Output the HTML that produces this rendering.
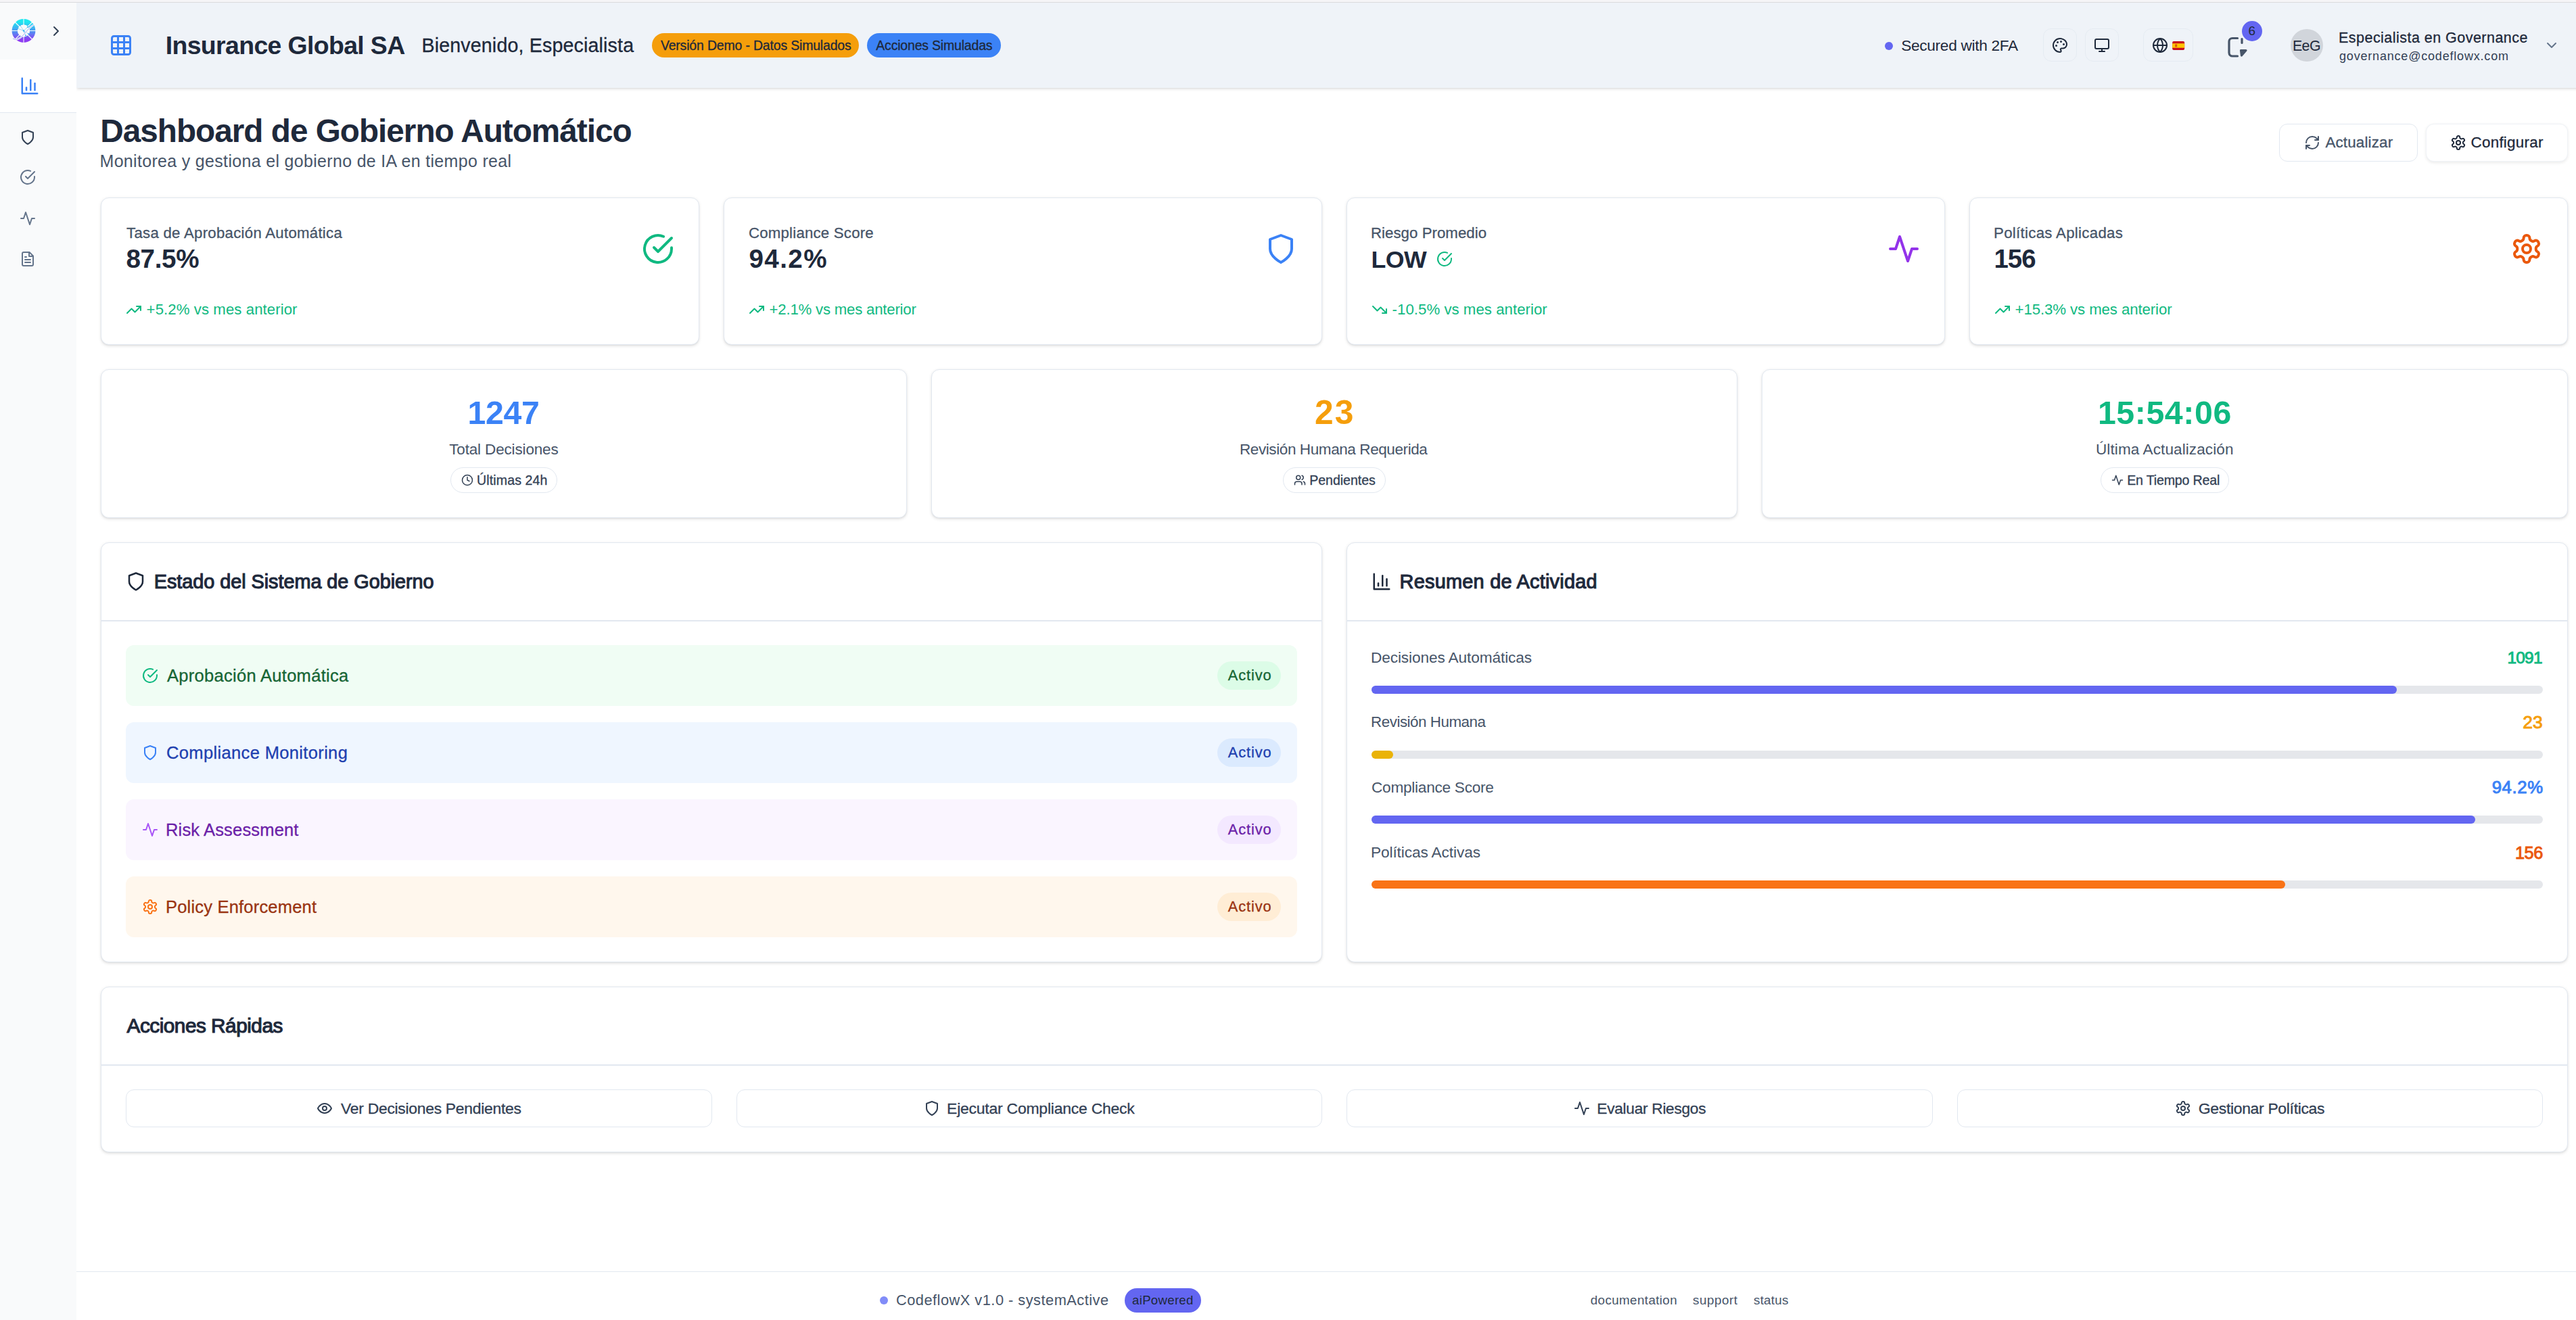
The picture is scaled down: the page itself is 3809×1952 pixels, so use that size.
<!DOCTYPE html>
<html lang="es"><head><meta charset="utf-8"><title>Dashboard de Gobierno Automático</title>
<style>
html,body{margin:0;padding:0;width:3809px;height:1952px;overflow:hidden;background:#fff}
body{position:relative;font-family:"Liberation Sans",sans-serif}
.t{position:absolute;line-height:0;white-space:nowrap}
.b{position:absolute}
.i{position:absolute;overflow:visible}
</style></head><body>
<div class="b" style="left:0px;top:0px;width:3809px;height:3px;background:#f5f4f6"></div>
<div class="b" style="left:0px;top:3px;width:3809px;height:1px;background:#dadadd"></div>
<div class="b" style="left:0px;top:4px;width:113px;height:1948px;background:#f9fafb"></div>
<div class="b" style="left:0px;top:88px;width:113px;height:78px;background:#ffffff"></div>
<div class="b" style="left:0px;top:166px;width:113px;height:1px;background:#e2e8f0"></div>
<div class="b" style="left:113px;top:4px;width:3696px;height:150px;overflow:hidden"><div class="b" style="left:0;top:0;width:3720px;height:125.5px;background:#eff3f8;box-shadow:0 1.5px 4.5px 0 rgba(0,0,0,0.1),0 1.5px 3px -1.5px rgba(0,0,0,0.1)"></div></div>
<div class="b" style="left:113px;top:1880px;width:3696px;height:72px;background:#ffffff;border-top:1.5px solid #e2e8f0"></div>
<svg class="i" style="left:16px;top:27px" width="38" height="38" viewBox="0 0 38 38">
<defs><linearGradient id="lg" x1="0" y1="0" x2="0" y2="1"><stop offset="0" stop-color="#1ee8f0"/><stop offset="0.5" stop-color="#4b9af2"/><stop offset="1" stop-color="#8d3df2"/></linearGradient></defs>
<circle cx="19" cy="18.5" r="13.2" fill="none" stroke="url(#lg)" stroke-width="8.4"/>
<g stroke="#f9fafb" stroke-width="1.1"><line x1="19" y1="0" x2="19" y2="38"/><line x1="0" y1="18.5" x2="38" y2="18.5"/><line x1="5.5" y1="5" x2="32.5" y2="32"/><line x1="32.5" y1="5" x2="5.5" y2="32"/></g>
<circle cx="19" cy="18.5" r="9" fill="#f9fafb"/>
<g stroke="#5cc0f0" stroke-width="0.6"><line x1="19" y1="18.5" x2="13.5" y2="10"/><line x1="19" y1="18.5" x2="10" y2="15"/><line x1="19" y1="18.5" x2="25" y2="13"/><line x1="19" y1="18.5" x2="22" y2="25.5"/><line x1="19" y1="18.5" x2="26" y2="23"/></g>
<g fill="#3fb4f0"><circle cx="13.5" cy="10" r="1.2"/><circle cx="10" cy="15" r="1.1"/><circle cx="25" cy="13" r="1.1"/><circle cx="22" cy="25.5" r="1.1"/><circle cx="26" cy="23" r="1"/><circle cx="19" cy="18.5" r="1.2"/><circle cx="20.5" cy="21" r="1"/></g>
<path d="M3 30 C 9 34, 16 28, 21 22 S 31 10, 34 10" stroke="#f9fafb" stroke-width="2.6" fill="none"/>
<path d="M3 30 C 9 34, 16 28, 21 22 S 31 10, 34 10" stroke="#7d8af0" stroke-width="0.7" fill="none"/>
</svg>
<svg class="i" style="left:71.00px;top:34.00px;color:#334155" width="24" height="24" viewBox="0 0 24 24" fill="none" stroke="currentColor" stroke-width="2" stroke-linecap="round" stroke-linejoin="round"><path d="m9 18 6-6-6-6"/></svg>
<svg class="i" style="left:28.70px;top:111.50px;color:#3b82f6" width="30" height="30" viewBox="0 0 24 24" fill="none" stroke="currentColor" stroke-width="2" stroke-linecap="round" stroke-linejoin="round"><path d="M3 3v18h18"/><path d="M18 17V9"/><path d="M13 17V5"/><path d="M8 17v-3"/></svg>
<svg class="i" style="left:28.70px;top:191.00px;color:#334155" width="24" height="24" viewBox="0 0 24 24" fill="none" stroke="currentColor" stroke-width="2" stroke-linecap="round" stroke-linejoin="round"><path d="M12 22s8-4 8-10V5l-8-3-8 3v7c0 6 8 10 8 10z"/></svg>
<svg class="i" style="left:28.70px;top:250.00px;color:#64748b" width="24" height="24" viewBox="0 0 24 24" fill="none" stroke="currentColor" stroke-width="2" stroke-linecap="round" stroke-linejoin="round"><path d="M22 11.08V12a10 10 0 1 1-5.93-9.14"/><polyline points="22 4 12 14.01 9 11.01"/></svg>
<svg class="i" style="left:28.70px;top:311.00px;color:#64748b" width="24" height="24" viewBox="0 0 24 24" fill="none" stroke="currentColor" stroke-width="2" stroke-linecap="round" stroke-linejoin="round"><polyline points="22 12 18 12 15 21 9 3 6 12 2 12"/></svg>
<svg class="i" style="left:28.70px;top:371.00px;color:#64748b" width="24" height="24" viewBox="0 0 24 24" fill="none" stroke="currentColor" stroke-width="2" stroke-linecap="round" stroke-linejoin="round"><path d="M14.5 2H6a2 2 0 0 0-2 2v16a2 2 0 0 0 2 2h12a2 2 0 0 0 2-2V7.5L14.5 2z"/><polyline points="14 2 14 8 20 8"/><line x1="16" x2="8" y1="13" y2="13"/><line x1="16" x2="8" y1="17" y2="17"/><line x1="10" x2="8" y1="9" y2="9"/></svg>
<svg class="i" style="left:161.00px;top:48.80px;color:#3b82f6" width="36" height="36" viewBox="0 0 24 24" fill="none" stroke="currentColor" stroke-width="2" stroke-linecap="round" stroke-linejoin="round"><rect width="18" height="18" x="3" y="3" rx="2"/><path d="M3 9h18"/><path d="M3 15h18"/><path d="M9 3v18"/><path d="M15 3v18"/></svg>
<div class="t" style="left:244.70px;top:66.81px;font-size:37.50px;letter-spacing:-0.678px;color:#1e293b;font-weight:bold;">Insurance Global SA</div>
<div class="t" style="left:623.40px;top:66.88px;font-size:28.63px;letter-spacing:0.148px;color:#1e293b;font-weight:normal;-webkit-text-stroke-width:0.3px;">Bienvenido, Especialista</div>
<div class="b" style="left:964px;top:49px;width:306px;height:36px;background:#f59e0b;border-radius:18px"></div>
<div class="t" style="left:976.90px;top:67.25px;font-size:19.48px;letter-spacing:-0.169px;color:#1e293b;font-weight:normal;-webkit-text-stroke-width:0.3px;">Versión Demo - Datos Simulados</div>
<div class="b" style="left:1282px;top:49px;width:198px;height:36px;background:#3b82f6;border-radius:18px"></div>
<div class="t" style="left:1295.30px;top:67.25px;font-size:19.48px;letter-spacing:-0.182px;color:#1e293b;font-weight:normal;-webkit-text-stroke-width:0.3px;">Acciones Simuladas</div>
<div class="b" style="left:2787.3px;top:61.5px;width:12px;height:12px;background:#6366f1;border-radius:6px"></div>
<div class="t" style="left:2811.20px;top:67.14px;font-size:22.67px;letter-spacing:-0.307px;color:#1e293b;font-weight:normal;">Secured with 2FA</div>
<div class="b" style="left:3021px;top:42px;width:50px;height:49.3px;border:1.5px solid rgba(226,232,240,0.8);border-radius:12px;box-sizing:border-box"></div>
<div class="b" style="left:3083px;top:42px;width:50px;height:49.3px;border:1.5px solid rgba(226,232,240,0.8);border-radius:12px;box-sizing:border-box"></div>
<div class="b" style="left:3169.3px;top:42px;width:73.4px;height:49.3px;border:1.5px solid rgba(226,232,240,0.8);border-radius:12px;box-sizing:border-box"></div>
<svg class="i" style="left:3034.00px;top:55.00px;color:#1e293b" width="24" height="24" viewBox="0 0 24 24" fill="none" stroke="currentColor" stroke-width="2" stroke-linecap="round" stroke-linejoin="round"><circle cx="13.5" cy="6.5" r=".5" fill="currentColor"/><circle cx="17.5" cy="10.5" r=".5" fill="currentColor"/><circle cx="8.5" cy="7.5" r=".5" fill="currentColor"/><circle cx="6.5" cy="12.5" r=".5" fill="currentColor"/><path d="M12 2C6.5 2 2 6.5 2 12s4.5 10 10 10c.926 0 1.648-.746 1.648-1.688 0-.437-.18-.835-.437-1.125-.29-.289-.438-.652-.438-1.125a1.64 1.64 0 0 1 1.668-1.668h1.996c3.051 0 5.555-2.503 5.555-5.554C21.965 6.012 17.461 2 12 2z"/></svg>
<svg class="i" style="left:3096.00px;top:55.00px;color:#1e293b" width="24" height="24" viewBox="0 0 24 24" fill="none" stroke="currentColor" stroke-width="2" stroke-linecap="round" stroke-linejoin="round"><rect width="20" height="14" x="2" y="3" rx="2"/><line x1="8" x2="16" y1="21" y2="21"/><line x1="12" x2="12" y1="17" y2="21"/></svg>
<svg class="i" style="left:3182.00px;top:54.80px;color:#1e293b" width="24" height="24" viewBox="0 0 24 24" fill="none" stroke="currentColor" stroke-width="2" stroke-linecap="round" stroke-linejoin="round"><circle cx="12" cy="12" r="10"/><path d="M12 2a14.5 14.5 0 0 0 0 20 14.5 14.5 0 0 0 0-20"/><path d="M2 12h20"/></svg>
<svg class="i" style="left:3212px;top:61px" width="18.3" height="13" viewBox="0 0 18 13"><rect width="18" height="13" rx="2" fill="#c60b1e"/><rect y="3.25" width="18" height="6.5" fill="#ffc400"/><rect x="4" y="4.5" width="3" height="4" fill="#c60b1e" opacity="0.6"/></svg>
<svg class="i" style="left:3280px;top:40px" width="60" height="60" viewBox="3280 40 60 60" fill="none" stroke="#475569" stroke-width="3.2" stroke-linecap="round" stroke-linejoin="round"><path d="M3308.5 56.5H3301a5 5 0 0 0-5 5V78a5 5 0 0 0 5 5h7.5"/><path d="M3315 57.5v6"/><path d="M3313.5 74.5L3321 74.5L3314.5 82Z" fill="#475569"/></svg>
<div class="b" style="left:3315px;top:31px;width:30px;height:30px;background:#6366f1;border-radius:15px"></div>
<div class="t" style="left:3324.50px;top:46.45px;font-size:18.90px;letter-spacing:0.000px;color:#1e293b;font-weight:normal;">6</div>
<div class="b" style="left:3387px;top:42.5px;width:48px;height:48px;background:#d1d5db;border-radius:24px"></div>
<div class="t" style="left:3389.90px;top:67.69px;font-size:21.38px;letter-spacing:-0.550px;color:#1e293b;font-weight:normal;">EeG</div>
<div class="t" style="left:3458.00px;top:55.75px;font-size:21.51px;letter-spacing:0.468px;color:#1e293b;font-weight:normal;-webkit-text-stroke-width:0.3px;">Especialista en Governance</div>
<div class="t" style="left:3459.00px;top:82.65px;font-size:18.02px;letter-spacing:0.800px;color:#334155;font-weight:normal;">governance@codeflowx.com</div>
<svg class="i" style="left:3761.00px;top:54.80px;color:#64748b" width="24" height="24" viewBox="0 0 24 24" fill="none" stroke="currentColor" stroke-width="2" stroke-linecap="round" stroke-linejoin="round"><path d="m6 9 6 6 6-6"/></svg>
<div class="t" style="left:148.30px;top:193.75px;font-size:47.75px;letter-spacing:-1.023px;color:#1e293b;font-weight:bold;">Dashboard de Gobierno Automático</div>
<div class="t" style="left:147.50px;top:238.14px;font-size:25.00px;letter-spacing:0.317px;color:#475569;font-weight:normal;">Monitorea y gestiona el gobierno de IA en tiempo real</div>
<div class="b" style="left:3370px;top:183px;width:204.5px;height:55.5px;background:#fff;border:1.5px solid #e2e8f0;border-radius:12px;box-sizing:border-box"></div>
<svg class="i" style="left:3407.00px;top:199.00px;color:#475569" width="24" height="24" viewBox="0 0 24 24" fill="none" stroke="currentColor" stroke-width="2" stroke-linecap="round" stroke-linejoin="round"><path d="M3 12a9 9 0 0 1 9-9 9.75 9.75 0 0 1 6.74 2.74L21 8"/><path d="M21 3v5h-5"/><path d="M21 12a9 9 0 0 1-9 9 9.75 9.75 0 0 1-6.74-2.74L3 16"/><path d="M8 16H3v5"/></svg>
<div class="t" style="left:3438.40px;top:211.34px;font-size:22.38px;letter-spacing:0.167px;color:#475569;font-weight:normal;-webkit-text-stroke-width:0.3px;">Actualizar</div>
<div class="b" style="left:3586.6px;top:183px;width:210.4px;height:55.5px;background:#fff;border:1.5px solid rgba(226,232,240,0.5);border-radius:12px;box-sizing:border-box;box-shadow:0 1.5px 4px rgba(0,0,0,0.08)"></div>
<svg class="i" style="left:3623.00px;top:199.00px;color:#1e293b" width="24" height="24" viewBox="0 0 24 24" fill="none" stroke="currentColor" stroke-width="2" stroke-linecap="round" stroke-linejoin="round"><path d="M12.22 2h-.44a2 2 0 0 0-2 2v.18a2 2 0 0 1-1 1.73l-.43.25a2 2 0 0 1-2 0l-.15-.08a2 2 0 0 0-2.73.73l-.22.38a2 2 0 0 0 .73 2.73l.15.1a2 2 0 0 1 1 1.72v.51a2 2 0 0 1-1 1.74l-.15.09a2 2 0 0 0-.73 2.73l.22.38a2 2 0 0 0 2.73.73l.15-.08a2 2 0 0 1 2 0l.43.25a2 2 0 0 1 1 1.73V20a2 2 0 0 0 2 2h.44a2 2 0 0 0 2-2v-.18a2 2 0 0 1 1-1.73l.43-.25a2 2 0 0 1 2 0l.15.08a2 2 0 0 0 2.73-.73l.22-.39a2 2 0 0 0-.73-2.73l-.15-.08a2 2 0 0 1-1-1.74v-.5a2 2 0 0 1 1-1.74l.15-.09a2 2 0 0 0 .73-2.73l-.22-.38a2 2 0 0 0-2.73-.73l-.15.08a2 2 0 0 1-2 0l-.43-.25a2 2 0 0 1-1-1.73V4a2 2 0 0 0-2-2z"/><circle cx="12" cy="12" r="3"/></svg>
<div class="t" style="left:3653.50px;top:211.34px;font-size:22.38px;letter-spacing:0.278px;color:#1e293b;font-weight:normal;-webkit-text-stroke-width:0.3px;">Configurar</div>
<div class="b" style="left:149px;top:292px;width:885px;height:218px;background:#fff;border:1.5px solid #e2e8f0;border-radius:12px;box-sizing:border-box;box-shadow:0 1.5px 4.5px 0 rgba(0,0,0,0.1),0 1.5px 3px -1.5px rgba(0,0,0,0.1)"></div>
<div class="t" style="left:187.00px;top:344.59px;font-size:22.24px;letter-spacing:0.261px;color:#475569;font-weight:normal;-webkit-text-stroke-width:0.3px;">Tasa de Aprobación Automática</div>
<div class="t" style="left:186.50px;top:383.10px;font-size:38.66px;letter-spacing:-0.375px;color:#1e293b;font-weight:bold;">87.5%</div>
<svg class="i" style="left:186.00px;top:446.00px;color:#10b981" width="24" height="24" viewBox="0 0 24 24" fill="none" stroke="currentColor" stroke-width="2" stroke-linecap="round" stroke-linejoin="round"><polyline points="22 7 13.5 15.5 8.5 10.5 2 17"/><polyline points="16 7 22 7 22 13"/></svg>
<div class="t" style="left:216.60px;top:458.29px;font-size:22.24px;letter-spacing:0.055px;color:#10b981;font-weight:normal;">+5.2% vs mes anterior</div>
<svg class="i" style="left:949.00px;top:344.00px;color:#10b981" width="48" height="48" viewBox="0 0 24 24" fill="none" stroke="currentColor" stroke-width="2" stroke-linecap="round" stroke-linejoin="round"><path d="M22 11.08V12a10 10 0 1 1-5.93-9.14"/><polyline points="22 4 12 14.01 9 11.01"/></svg>
<div class="b" style="left:1070px;top:292px;width:885px;height:218px;background:#fff;border:1.5px solid #e2e8f0;border-radius:12px;box-sizing:border-box;box-shadow:0 1.5px 4.5px 0 rgba(0,0,0,0.1),0 1.5px 3px -1.5px rgba(0,0,0,0.1)"></div>
<div class="t" style="left:1107.00px;top:344.59px;font-size:22.24px;letter-spacing:0.200px;color:#475569;font-weight:normal;-webkit-text-stroke-width:0.3px;">Compliance Score</div>
<div class="t" style="left:1107.50px;top:383.10px;font-size:38.66px;letter-spacing:1.375px;color:#1e293b;font-weight:bold;">94.2%</div>
<svg class="i" style="left:1107.00px;top:446.00px;color:#10b981" width="24" height="24" viewBox="0 0 24 24" fill="none" stroke="currentColor" stroke-width="2" stroke-linecap="round" stroke-linejoin="round"><polyline points="22 7 13.5 15.5 8.5 10.5 2 17"/><polyline points="16 7 22 7 22 13"/></svg>
<div class="t" style="left:1137.60px;top:458.29px;font-size:22.24px;letter-spacing:-0.230px;color:#10b981;font-weight:normal;">+2.1% vs mes anterior</div>
<svg class="i" style="left:1870.00px;top:344.00px;color:#3b82f6" width="48" height="48" viewBox="0 0 24 24" fill="none" stroke="currentColor" stroke-width="2" stroke-linecap="round" stroke-linejoin="round"><path d="M12 22s8-4 8-10V5l-8-3-8 3v7c0 6 8 10 8 10z"/></svg>
<div class="b" style="left:1991px;top:292px;width:885px;height:218px;background:#fff;border:1.5px solid #e2e8f0;border-radius:12px;box-sizing:border-box;box-shadow:0 1.5px 4.5px 0 rgba(0,0,0,0.1),0 1.5px 3px -1.5px rgba(0,0,0,0.1)"></div>
<div class="t" style="left:2027.00px;top:344.59px;font-size:22.24px;letter-spacing:0.036px;color:#475569;font-weight:normal;-webkit-text-stroke-width:0.3px;">Riesgo Promedio</div>
<div class="t" style="left:2027.50px;top:384.12px;font-size:35.72px;letter-spacing:-0.600px;color:#1e293b;font-weight:bold;">LOW</div>
<svg class="i" style="left:2028.00px;top:446.00px;color:#10b981" width="24" height="24" viewBox="0 0 24 24" fill="none" stroke="currentColor" stroke-width="2" stroke-linecap="round" stroke-linejoin="round"><polyline points="22 17 13.5 8.5 8.5 13.5 2 7"/><polyline points="16 17 22 17 22 11"/></svg>
<div class="t" style="left:2058.60px;top:458.29px;font-size:22.24px;letter-spacing:0.024px;color:#10b981;font-weight:normal;">-10.5% vs mes anterior</div>
<svg class="i" style="left:2791.00px;top:344.00px;color:#9333ea" width="48" height="48" viewBox="0 0 24 24" fill="none" stroke="currentColor" stroke-width="2" stroke-linecap="round" stroke-linejoin="round"><polyline points="22 12 18 12 15 21 9 3 6 12 2 12"/></svg>
<div class="b" style="left:2912px;top:292px;width:885px;height:218px;background:#fff;border:1.5px solid #e2e8f0;border-radius:12px;box-sizing:border-box;box-shadow:0 1.5px 4.5px 0 rgba(0,0,0,0.1),0 1.5px 3px -1.5px rgba(0,0,0,0.1)"></div>
<div class="t" style="left:2948.00px;top:344.59px;font-size:22.24px;letter-spacing:0.306px;color:#475569;font-weight:normal;-webkit-text-stroke-width:0.3px;">Políticas Aplicadas</div>
<div class="t" style="left:2948.50px;top:383.21px;font-size:38.37px;letter-spacing:-1.000px;color:#1e293b;font-weight:bold;">156</div>
<svg class="i" style="left:2949.00px;top:446.00px;color:#10b981" width="24" height="24" viewBox="0 0 24 24" fill="none" stroke="currentColor" stroke-width="2" stroke-linecap="round" stroke-linejoin="round"><polyline points="22 7 13.5 15.5 8.5 10.5 2 17"/><polyline points="16 7 22 7 22 13"/></svg>
<div class="t" style="left:2979.60px;top:458.29px;font-size:22.24px;letter-spacing:-0.105px;color:#10b981;font-weight:normal;">+15.3% vs mes anterior</div>
<svg class="i" style="left:3712.00px;top:344.00px;color:#ea580c" width="48" height="48" viewBox="0 0 24 24" fill="none" stroke="currentColor" stroke-width="2" stroke-linecap="round" stroke-linejoin="round"><path d="M12.22 2h-.44a2 2 0 0 0-2 2v.18a2 2 0 0 1-1 1.73l-.43.25a2 2 0 0 1-2 0l-.15-.08a2 2 0 0 0-2.73.73l-.22.38a2 2 0 0 0 .73 2.73l.15.1a2 2 0 0 1 1 1.72v.51a2 2 0 0 1-1 1.74l-.15.09a2 2 0 0 0-.73 2.73l.22.38a2 2 0 0 0 2.73.73l.15-.08a2 2 0 0 1 2 0l.43.25a2 2 0 0 1 1 1.73V20a2 2 0 0 0 2 2h.44a2 2 0 0 0 2-2v-.18a2 2 0 0 1 1-1.73l.43-.25a2 2 0 0 1 2 0l.15.08a2 2 0 0 0 2.73-.73l.22-.39a2 2 0 0 0-.73-2.73l-.15-.08a2 2 0 0 1-1-1.74v-.5a2 2 0 0 1 1-1.74l.15-.09a2 2 0 0 0 .73-2.73l-.22-.38a2 2 0 0 0-2.73-.73l-.15.08a2 2 0 0 1-2 0l-.43-.25a2 2 0 0 1-1-1.73V4a2 2 0 0 0-2-2z"/><circle cx="12" cy="12" r="3"/></svg>
<svg class="i" style="left:2124.00px;top:371.00px;color:#10b981" width="24" height="24" viewBox="0 0 24 24" fill="none" stroke="currentColor" stroke-width="2" stroke-linecap="round" stroke-linejoin="round"><path d="M22 11.08V12a10 10 0 1 1-5.93-9.14"/><polyline points="22 4 12 14.01 9 11.01"/></svg>
<div class="b" style="left:149px;top:546px;width:1192px;height:220px;background:#fff;border:1.5px solid #e2e8f0;border-radius:12px;box-sizing:border-box;box-shadow:0 1.5px 4.5px 0 rgba(0,0,0,0.1),0 1.5px 3px -1.5px rgba(0,0,0,0.1)"></div>
<div class="t" style="left:691.45px;top:610.28px;font-size:48.26px;letter-spacing:-0.300px;color:#3b82f6;font-weight:bold;">1247</div>
<div class="t" style="left:664.20px;top:664.59px;font-size:22.53px;letter-spacing:-0.160px;color:#475569;font-weight:normal;">Total Decisiones</div>
<div class="b" style="left:666.1px;top:691px;width:157.8px;height:37.7px;border:1.5px solid #e2e8f0;border-radius:19px;box-sizing:border-box;background:#fff"></div>
<svg class="i" style="left:682.10px;top:700.80px;color:#334155" width="18" height="18" viewBox="0 0 24 24" fill="none" stroke="currentColor" stroke-width="2" stroke-linecap="round" stroke-linejoin="round"><circle cx="12" cy="12" r="10"/><polyline points="12 6 12 12 16 14"/></svg>
<div class="t" style="left:705.10px;top:710.00px;font-size:19.62px;letter-spacing:0.080px;color:#334155;font-weight:normal;-webkit-text-stroke-width:0.3px;">Últimas 24h</div>
<div class="b" style="left:1377px;top:546px;width:1192px;height:220px;background:#fff;border:1.5px solid #e2e8f0;border-radius:12px;box-sizing:border-box;box-shadow:0 1.5px 4.5px 0 rgba(0,0,0,0.1),0 1.5px 3px -1.5px rgba(0,0,0,0.1)"></div>
<div class="t" style="left:1944.00px;top:609.77px;font-size:49.72px;letter-spacing:2.000px;color:#f59e0b;font-weight:bold;">23</div>
<div class="t" style="left:1833.00px;top:664.59px;font-size:22.53px;letter-spacing:-0.417px;color:#475569;font-weight:normal;">Revisión Humana Requerida</div>
<div class="b" style="left:1897.2px;top:691px;width:151.6px;height:37.7px;border:1.5px solid #e2e8f0;border-radius:19px;box-sizing:border-box;background:#fff"></div>
<svg class="i" style="left:1913.20px;top:700.80px;color:#334155" width="18" height="18" viewBox="0 0 24 24" fill="none" stroke="currentColor" stroke-width="2" stroke-linecap="round" stroke-linejoin="round"><path d="M16 21v-2a4 4 0 0 0-4-4H6a4 4 0 0 0-4 4v2"/><circle cx="9" cy="7" r="4"/><path d="M22 21v-2a4 4 0 0 0-3-3.87"/><path d="M16 3.13a4 4 0 0 1 0 7.75"/></svg>
<div class="t" style="left:1936.20px;top:710.00px;font-size:19.62px;letter-spacing:-0.044px;color:#334155;font-weight:normal;-webkit-text-stroke-width:0.3px;">Pendientes</div>
<div class="b" style="left:2605px;top:546px;width:1192px;height:220px;background:#fff;border:1.5px solid #e2e8f0;border-radius:12px;box-sizing:border-box;box-shadow:0 1.5px 4.5px 0 rgba(0,0,0,0.1),0 1.5px 3px -1.5px rgba(0,0,0,0.1)"></div>
<div class="t" style="left:3101.90px;top:610.28px;font-size:48.26px;letter-spacing:0.600px;color:#10b981;font-weight:bold;">15:54:06</div>
<div class="t" style="left:3099.00px;top:664.59px;font-size:22.53px;letter-spacing:0.105px;color:#475569;font-weight:normal;">Última Actualización</div>
<div class="b" style="left:3106.2px;top:691px;width:189.6px;height:37.7px;border:1.5px solid #e2e8f0;border-radius:19px;box-sizing:border-box;background:#fff"></div>
<svg class="i" style="left:3122.20px;top:700.80px;color:#334155" width="18" height="18" viewBox="0 0 24 24" fill="none" stroke="currentColor" stroke-width="2" stroke-linecap="round" stroke-linejoin="round"><polyline points="22 12 18 12 15 21 9 3 6 12 2 12"/></svg>
<div class="t" style="left:3145.20px;top:710.00px;font-size:19.62px;letter-spacing:-0.185px;color:#334155;font-weight:normal;-webkit-text-stroke-width:0.3px;">En Tiempo Real</div>
<div class="b" style="left:149px;top:802px;width:1806px;height:621px;background:#fff;border:1.5px solid #e2e8f0;border-radius:12px;box-sizing:border-box;box-shadow:0 1.5px 4.5px 0 rgba(0,0,0,0.1),0 1.5px 3px -1.5px rgba(0,0,0,0.1)"></div>
<div class="b" style="left:149px;top:917px;width:1806px;height:1.5px;background:#e2e8f0"></div>
<div class="b" style="left:1991px;top:802px;width:1806px;height:621px;background:#fff;border:1.5px solid #e2e8f0;border-radius:12px;box-sizing:border-box;box-shadow:0 1.5px 4.5px 0 rgba(0,0,0,0.1),0 1.5px 3px -1.5px rgba(0,0,0,0.1)"></div>
<div class="b" style="left:1991px;top:917px;width:1806px;height:1.5px;background:#e2e8f0"></div>
<svg class="i" style="left:186.00px;top:845.00px;color:#1e293b" width="30" height="30" viewBox="0 0 24 24" fill="none" stroke="currentColor" stroke-width="2" stroke-linecap="round" stroke-linejoin="round"><path d="M12 22s8-4 8-10V5l-8-3-8 3v7c0 6 8 10 8 10z"/></svg>
<div class="t" style="left:227.75px;top:860.18px;font-size:28.92px;letter-spacing:-0.079px;color:#1e293b;font-weight:normal;-webkit-text-stroke-width:1.10px;">Estado del Sistema de Gobierno</div>
<div class="b" style="left:186px;top:954px;width:1732px;height:90px;background:#f0fdf4;border-radius:12px"></div>
<svg class="i" style="left:210.00px;top:987.00px;color:#10b981" width="24" height="24" viewBox="0 0 24 24" fill="none" stroke="currentColor" stroke-width="2" stroke-linecap="round" stroke-linejoin="round"><path d="M22 11.08V12a10 10 0 1 1-5.93-9.14"/><polyline points="22 4 12 14.01 9 11.01"/></svg>
<div class="t" style="left:247.00px;top:999.14px;font-size:25.58px;letter-spacing:0.260px;color:#166534;font-weight:normal;-webkit-text-stroke-width:0.3px;">Aprobación Automática</div>
<div class="b" style="left:1800px;top:978px;width:94px;height:42px;background:#dcfce7;border-radius:21px"></div>
<div class="t" style="left:1815.80px;top:999.25px;font-size:21.80px;letter-spacing:0.900px;color:#166534;font-weight:normal;-webkit-text-stroke-width:0.3px;">Activo</div>
<div class="b" style="left:186px;top:1068px;width:1732px;height:90px;background:#eff6ff;border-radius:12px"></div>
<svg class="i" style="left:210.00px;top:1101.00px;color:#3b82f6" width="24" height="24" viewBox="0 0 24 24" fill="none" stroke="currentColor" stroke-width="2" stroke-linecap="round" stroke-linejoin="round"><path d="M12 22s8-4 8-10V5l-8-3-8 3v7c0 6 8 10 8 10z"/></svg>
<div class="t" style="left:246.00px;top:1113.14px;font-size:25.58px;letter-spacing:0.315px;color:#1e40af;font-weight:normal;-webkit-text-stroke-width:0.3px;">Compliance Monitoring</div>
<div class="b" style="left:1800px;top:1092px;width:94px;height:42px;background:#dbeafe;border-radius:21px"></div>
<div class="t" style="left:1815.80px;top:1113.25px;font-size:21.80px;letter-spacing:0.900px;color:#1e40af;font-weight:normal;-webkit-text-stroke-width:0.3px;">Activo</div>
<div class="b" style="left:186px;top:1182px;width:1732px;height:90px;background:#faf5ff;border-radius:12px"></div>
<svg class="i" style="left:210.00px;top:1215.00px;color:#a855f7" width="24" height="24" viewBox="0 0 24 24" fill="none" stroke="currentColor" stroke-width="2" stroke-linecap="round" stroke-linejoin="round"><polyline points="22 12 18 12 15 21 9 3 6 12 2 12"/></svg>
<div class="t" style="left:245.00px;top:1227.14px;font-size:25.58px;letter-spacing:0.121px;color:#6b21a8;font-weight:normal;-webkit-text-stroke-width:0.3px;">Risk Assessment</div>
<div class="b" style="left:1800px;top:1206px;width:94px;height:42px;background:#f3e8ff;border-radius:21px"></div>
<div class="t" style="left:1815.80px;top:1227.25px;font-size:21.80px;letter-spacing:0.900px;color:#6b21a8;font-weight:normal;-webkit-text-stroke-width:0.3px;">Activo</div>
<div class="b" style="left:186px;top:1296px;width:1732px;height:90px;background:#fff7ed;border-radius:12px"></div>
<svg class="i" style="left:210.00px;top:1329.00px;color:#f97316" width="24" height="24" viewBox="0 0 24 24" fill="none" stroke="currentColor" stroke-width="2" stroke-linecap="round" stroke-linejoin="round"><path d="M12.22 2h-.44a2 2 0 0 0-2 2v.18a2 2 0 0 1-1 1.73l-.43.25a2 2 0 0 1-2 0l-.15-.08a2 2 0 0 0-2.73.73l-.22.38a2 2 0 0 0 .73 2.73l.15.1a2 2 0 0 1 1 1.72v.51a2 2 0 0 1-1 1.74l-.15.09a2 2 0 0 0-.73 2.73l.22.38a2 2 0 0 0 2.73.73l.15-.08a2 2 0 0 1 2 0l.43.25a2 2 0 0 1 1 1.73V20a2 2 0 0 0 2 2h.44a2 2 0 0 0 2-2v-.18a2 2 0 0 1 1-1.73l.43-.25a2 2 0 0 1 2 0l.15.08a2 2 0 0 0 2.73-.73l.22-.39a2 2 0 0 0-.73-2.73l-.15-.08a2 2 0 0 1-1-1.74v-.5a2 2 0 0 1 1-1.74l.15-.09a2 2 0 0 0 .73-2.73l-.22-.38a2 2 0 0 0-2.73-.73l-.15.08a2 2 0 0 1-2 0l-.43-.25a2 2 0 0 1-1-1.73V4a2 2 0 0 0-2-2z"/><circle cx="12" cy="12" r="3"/></svg>
<div class="t" style="left:245.00px;top:1341.14px;font-size:25.58px;letter-spacing:0.159px;color:#9a3412;font-weight:normal;-webkit-text-stroke-width:0.3px;">Policy Enforcement</div>
<div class="b" style="left:1800px;top:1320px;width:94px;height:42px;background:#ffedd5;border-radius:21px"></div>
<div class="t" style="left:1815.80px;top:1341.25px;font-size:21.80px;letter-spacing:0.900px;color:#9a3412;font-weight:normal;-webkit-text-stroke-width:0.3px;">Activo</div>
<svg class="i" style="left:2027.60px;top:845.00px;color:#1e293b" width="30" height="30" viewBox="0 0 24 24" fill="none" stroke="currentColor" stroke-width="2" stroke-linecap="round" stroke-linejoin="round"><path d="M3 3v18h18"/><path d="M18 17V9"/><path d="M13 17V5"/><path d="M8 17v-3"/></svg>
<div class="t" style="left:2069.55px;top:860.08px;font-size:28.92px;letter-spacing:0.232px;color:#1e293b;font-weight:normal;-webkit-text-stroke-width:1.10px;">Resumen de Actividad</div>
<div class="t" style="left:2027.00px;top:972.34px;font-size:22.67px;letter-spacing:-0.114px;color:#475569;font-weight:normal;">Decisiones Automáticas</div>
<div class="t" style="left:3707.49px;top:972.95px;font-size:24.39px;letter-spacing:-0.759px;color:#10b981;font-weight:normal;-webkit-text-stroke-width:0.98px;">1091</div>
<div class="b" style="left:2028px;top:1014px;width:1732px;height:12px;background:#e5e7eb;border-radius:6px"></div>
<div class="b" style="left:2028px;top:1014px;width:1516px;height:12px;background:#6366f1;border-radius:6px"></div>
<div class="t" style="left:2027.00px;top:1068.45px;font-size:22.38px;letter-spacing:-0.471px;color:#475569;font-weight:normal;">Revisión Humana</div>
<div class="t" style="left:3730.19px;top:1068.25px;font-size:26.42px;letter-spacing:0.022px;color:#f59e0b;font-weight:normal;-webkit-text-stroke-width:0.98px;">23</div>
<div class="b" style="left:2028px;top:1110px;width:1732px;height:12px;background:#e5e7eb;border-radius:6px"></div>
<div class="b" style="left:2028px;top:1110px;width:32px;height:12px;background:#eab308;border-radius:6px"></div>
<div class="t" style="left:2028.00px;top:1164.34px;font-size:22.67px;letter-spacing:-0.280px;color:#475569;font-weight:normal;">Compliance Score</div>
<div class="t" style="left:3684.69px;top:1164.49px;font-size:25.73px;letter-spacing:0.631px;color:#3b82f6;font-weight:normal;-webkit-text-stroke-width:0.98px;">94.2%</div>
<div class="b" style="left:2028px;top:1206px;width:1732px;height:12px;background:#e5e7eb;border-radius:6px"></div>
<div class="b" style="left:2028px;top:1206px;width:1632px;height:12px;background:#6366f1;border-radius:6px"></div>
<div class="t" style="left:2027.00px;top:1260.34px;font-size:22.67px;letter-spacing:-0.106px;color:#475569;font-weight:normal;">Políticas Activas</div>
<div class="t" style="left:3718.89px;top:1260.63px;font-size:25.30px;letter-spacing:-0.339px;color:#ea580c;font-weight:normal;-webkit-text-stroke-width:0.98px;">156</div>
<div class="b" style="left:2028px;top:1302px;width:1732px;height:12px;background:#e5e7eb;border-radius:6px"></div>
<div class="b" style="left:2028px;top:1302px;width:1351px;height:12px;background:#f97316;border-radius:6px"></div>
<div class="b" style="left:149px;top:1459px;width:3648px;height:245px;background:#fff;border:1.5px solid #e2e8f0;border-radius:12px;box-sizing:border-box;box-shadow:0 1.5px 4.5px 0 rgba(0,0,0,0.1),0 1.5px 3px -1.5px rgba(0,0,0,0.1)"></div>
<div class="b" style="left:149px;top:1574px;width:3648px;height:1.5px;background:#e2e8f0"></div>
<div class="t" style="left:187.57px;top:1517.38px;font-size:29.80px;letter-spacing:-0.515px;color:#1e293b;font-weight:normal;-webkit-text-stroke-width:1.13px;">Acciones Rápidas</div>
<div class="b" style="left:186.0px;top:1611px;width:866.5px;height:55.5px;border:1.5px solid #e2e8f0;border-radius:12px;box-sizing:border-box;background:#fff"></div>
<svg class="i" style="left:468.10px;top:1626.80px;color:#334155" width="24" height="24" viewBox="0 0 24 24" fill="none" stroke="currentColor" stroke-width="2" stroke-linecap="round" stroke-linejoin="round"><path d="M2 12s3-7 10-7 10 7 10 7-3 7-10 7-10-7-10-7Z"/><circle cx="12" cy="12" r="3"/></svg>
<div class="t" style="left:504.10px;top:1639.34px;font-size:22.97px;letter-spacing:-0.321px;color:#334155;font-weight:normal;-webkit-text-stroke-width:0.3px;">Ver Decisiones Pendientes</div>
<div class="b" style="left:1088.5px;top:1611px;width:866.5px;height:55.5px;border:1.5px solid #e2e8f0;border-radius:12px;box-sizing:border-box;background:#fff"></div>
<svg class="i" style="left:1366.10px;top:1626.80px;color:#334155" width="24" height="24" viewBox="0 0 24 24" fill="none" stroke="currentColor" stroke-width="2" stroke-linecap="round" stroke-linejoin="round"><path d="M12 22s8-4 8-10V5l-8-3-8 3v7c0 6 8 10 8 10z"/></svg>
<div class="t" style="left:1400.10px;top:1639.34px;font-size:22.97px;letter-spacing:-0.238px;color:#334155;font-weight:normal;-webkit-text-stroke-width:0.3px;">Ejecutar Compliance Check</div>
<div class="b" style="left:1991.0px;top:1611px;width:866.5px;height:55.5px;border:1.5px solid #e2e8f0;border-radius:12px;box-sizing:border-box;background:#fff"></div>
<svg class="i" style="left:2327.30px;top:1626.80px;color:#334155" width="24" height="24" viewBox="0 0 24 24" fill="none" stroke="currentColor" stroke-width="2" stroke-linecap="round" stroke-linejoin="round"><polyline points="22 12 18 12 15 21 9 3 6 12 2 12"/></svg>
<div class="t" style="left:2361.30px;top:1639.38px;font-size:22.87px;letter-spacing:-0.364px;color:#334155;font-weight:normal;-webkit-text-stroke-width:0.3px;">Evaluar Riesgos</div>
<div class="b" style="left:2893.5px;top:1611px;width:866.5px;height:55.5px;border:1.5px solid #e2e8f0;border-radius:12px;box-sizing:border-box;background:#fff"></div>
<svg class="i" style="left:3215.75px;top:1626.80px;color:#334155" width="24" height="24" viewBox="0 0 24 24" fill="none" stroke="currentColor" stroke-width="2" stroke-linecap="round" stroke-linejoin="round"><path d="M12.22 2h-.44a2 2 0 0 0-2 2v.18a2 2 0 0 1-1 1.73l-.43.25a2 2 0 0 1-2 0l-.15-.08a2 2 0 0 0-2.73.73l-.22.38a2 2 0 0 0 .73 2.73l.15.1a2 2 0 0 1 1 1.72v.51a2 2 0 0 1-1 1.74l-.15.09a2 2 0 0 0-.73 2.73l.22.38a2 2 0 0 0 2.73.73l.15-.08a2 2 0 0 1 2 0l.43.25a2 2 0 0 1 1 1.73V20a2 2 0 0 0 2 2h.44a2 2 0 0 0 2-2v-.18a2 2 0 0 1 1-1.73l.43-.25a2 2 0 0 1 2 0l.15.08a2 2 0 0 0 2.73-.73l.22-.39a2 2 0 0 0-.73-2.73l-.15-.08a2 2 0 0 1-1-1.74v-.5a2 2 0 0 1 1-1.74l.15-.09a2 2 0 0 0 .73-2.73l-.22-.38a2 2 0 0 0-2.73-.73l-.15.08a2 2 0 0 1-2 0l-.43-.25a2 2 0 0 1-1-1.73V4a2 2 0 0 0-2-2z"/><circle cx="12" cy="12" r="3"/></svg>
<div class="t" style="left:3250.75px;top:1639.34px;font-size:22.97px;letter-spacing:-0.333px;color:#334155;font-weight:normal;-webkit-text-stroke-width:0.3px;">Gestionar Políticas</div>
<div class="b" style="left:1301px;top:1917px;width:12px;height:12px;background:#818cf8;border-radius:6px"></div>
<div class="t" style="left:1325.00px;top:1923.45px;font-size:21.80px;letter-spacing:0.489px;color:#475569;font-weight:normal;">CodeflowX v1.0 - systemActive</div>
<div class="b" style="left:1663px;top:1905px;width:113px;height:36px;background:#6366f1;border-radius:18px"></div>
<div class="t" style="left:1674.10px;top:1923.35px;font-size:18.60px;letter-spacing:0.300px;color:#1e293b;font-weight:normal;">aiPowered</div>
<div class="t" style="left:2351.70px;top:1923.05px;font-size:18.90px;letter-spacing:0.342px;color:#475569;font-weight:normal;">documentation</div>
<div class="t" style="left:2503.00px;top:1923.05px;font-size:18.90px;letter-spacing:0.500px;color:#475569;font-weight:normal;">support</div>
<div class="t" style="left:2593.00px;top:1923.05px;font-size:18.90px;letter-spacing:0.200px;color:#475569;font-weight:normal;">status</div>
</body></html>
